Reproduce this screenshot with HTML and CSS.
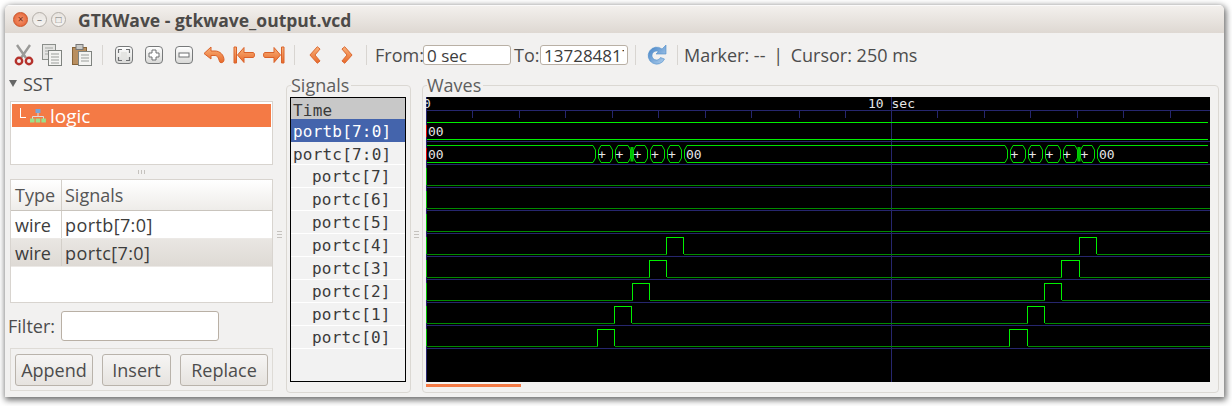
FILE: index.html
```html
<!DOCTYPE html>
<html lang="en">
<head>
  <meta charset="UTF-8" />
  <title>GTKWave - gtkwave_output.vcd</title>
  <link rel="stylesheet" href="styles.css">
</head>
<body>

<svg class="defs" width="0" height="0">
  <defs>
    <linearGradient id="orange" x1="0" y1="0" x2="0" y2="1">
      <stop offset="0" stop-color="#f9b27a"/>
      <stop offset="1" stop-color="#e8692a"/>
    </linearGradient>
    <linearGradient id="key" x1="0" y1="0" x2="0" y2="1">
      <stop offset="0" stop-color="#ffffff"/>
      <stop offset="1" stop-color="#d8d8d6"/>
    </linearGradient>
    <linearGradient id="blue" x1="0" y1="0" x2="1" y2="1">
      <stop offset="0" stop-color="#3f7fc4"/>
      <stop offset="1" stop-color="#b5d2ee"/>
    </linearGradient>
  </defs>
</svg>

<div class="window">

  <div class="titlebar">
    <span class="wm-btn close">&#215;</span>
    <span class="wm-btn">&#8211;</span>
    <span class="wm-btn">&#9633;</span>
    <span class="title">GTKWave - gtkwave_output.vcd</span>
  </div>

  <div class="toolbar">
    <!-- cut -->
    <svg class="tool cut" width="20" height="22" viewBox="0 0 20 22">
      <path d="M3 1 L12 14 M16 1 L7 14" stroke="#9a9a98" stroke-width="2.4" fill="none"/>
      <circle cx="5" cy="17" r="3.2" fill="none" stroke="#b5322c" stroke-width="2.4"/>
      <circle cx="15" cy="17" r="3.2" fill="none" stroke="#b5322c" stroke-width="2.4"/>
    </svg>
    <!-- copy -->
    <svg class="tool doc" width="20" height="22" viewBox="0 0 20 22">
      <rect x="0.5" y="0.5" width="13" height="15" fill="#e4e4e2" stroke="#8b8f8b"/>
      <path d="M3 4h8M3 7h8M3 10h8" stroke="#a5a8a5"/>
      <rect x="6.5" y="6.5" width="13" height="15" fill="#f4f4f2" stroke="#7f837f"/>
      <path d="M9 10h8M9 13h8M9 16h8M9 19h8" stroke="#9a9d9a"/>
    </svg>
    <!-- paste -->
    <svg class="tool doc" width="20" height="22" viewBox="0 0 20 22">
      <rect x="0.5" y="3.5" width="14" height="17" fill="#b98f5f" stroke="#866338"/>
      <rect x="4" y="0.5" width="7" height="5" fill="#c9c9c6" stroke="#777"/>
      <rect x="6.5" y="7.5" width="13" height="14" fill="#f4f4f2" stroke="#7f837f"/>
      <path d="M9 11h8M9 14h8M9 17h8" stroke="#9a9d9a"/>
    </svg>
    <span class="sep first"></span>
    <!-- zoom fit -->
    <svg class="tool key" width="18" height="18" viewBox="0 0 18 18">
      <rect x="0.5" y="0.5" width="17" height="17" rx="3.5" fill="url(#key)" stroke="#77797a"/>
      <rect x="6" y="6" width="6" height="6" fill="#e4e4e2"/>
      <path d="M3.5 7V3.5H7M11 3.5h3.5V7M14.5 11v3.5H11M7 14.5H3.5V11" fill="none" stroke="#6f7173" stroke-width="1.2"/>
    </svg>
    <!-- zoom in -->
    <svg class="tool key" width="18" height="18" viewBox="0 0 18 18">
      <rect x="0.5" y="0.5" width="17" height="17" rx="3.5" fill="url(#key)" stroke="#77797a"/>
      <path d="M7 4h4v3h3v4h-3v3H7v-3H4V7h3z" fill="#fff" stroke="#6f7173"/>
    </svg>
    <!-- zoom out -->
    <svg class="tool key last" width="18" height="18" viewBox="0 0 18 18">
      <rect x="0.5" y="0.5" width="17" height="17" rx="3.5" fill="url(#key)" stroke="#77797a"/>
      <rect x="4" y="7" width="10" height="4" fill="#fff" stroke="#6f7173"/>
    </svg>
    <!-- undo zoom -->
    <svg class="tool wide" width="22" height="18" viewBox="0 0 22 18">
      <path d="M8 1 L1 7.5 L8 13 V9.5 H12 C14.5 9.5 15.5 12 16.5 15.5 C17 17.5 21 17 21 14 C21 9 17 5 12 5 H8 Z" fill="url(#orange)" stroke="#d9622a" stroke-linejoin="round"/>
    </svg>
    <!-- to start -->
    <svg class="tool wide" width="22" height="18" viewBox="0 0 22 18">
      <path d="M1 1h2.5v16H1z" fill="url(#orange)" stroke="#d9622a"/>
      <path d="M11 1.5 L4.5 9 L11 16.5 V11.5 H20 C22 11.5 22 6.5 20 6.5 H11 Z" fill="url(#orange)" stroke="#d9622a" stroke-linejoin="round"/>
    </svg>
    <!-- to end -->
    <svg class="tool wide end" width="22" height="18" viewBox="0 0 22 18">
      <path d="M18.5 1h2.5v16h-2.5z" fill="url(#orange)" stroke="#d9622a"/>
      <path d="M11 1.5 L17.5 9 L11 16.5 V11.5 H2 C0 11.5 0 6.5 2 6.5 H11 Z" fill="url(#orange)" stroke="#d9622a" stroke-linejoin="round"/>
    </svg>
    <span class="sep second"></span>
    <!-- page left -->
    <svg class="tool nav" width="12" height="20" viewBox="0 0 13 20">
      <path d="M9 1 L1 10 L9 19 L12 16.5 L6.5 10 L12 3.5 Z" fill="url(#orange)" stroke="#d9622a" stroke-linejoin="round"/>
    </svg>
    <!-- page right -->
    <svg class="tool nav next" width="12" height="20" viewBox="0 0 13 20">
      <path d="M4 1 L12 10 L4 19 L1 16.5 L6.5 10 L1 3.5 Z" fill="url(#orange)" stroke="#d9622a" stroke-linejoin="round"/>
    </svg>
    <span class="sep third"></span>
    <label class="tb-label from">From:</label>
    <input class="entry" type="text" value="0 sec">
    <label class="tb-label to">To:</label>
    <input class="entry" type="text" value="1372848174">
    <span class="sep fourth"></span>
    <!-- reload -->
    <svg class="tool reload" width="21" height="22" viewBox="0 0 21 22">
      <path d="M16 5 A8.5 8.5 0 1 0 18.5 15 L14.5 13.5 A4.5 4.5 0 1 1 12.5 7.5 L10 10 H20 V1 L16.5 4.5 Z" fill="url(#blue)" stroke="#4f8ecb" stroke-width="0.6"/>
    </svg>
    <span class="sep fifth"></span>
    <span class="tb-label status">Marker: -- <b class="bar">|</b> Cursor: 250 ms</span>
  </div>

  <div class="main">

    <div class="left-pane">
      <div class="expander"><span class="arrow"></span>SST</div>

      <div class="tree">
        <div class="tree-row">
          <span class="tree-line"></span>
          <svg width="16" height="14" viewBox="0 0 16 14">
            <rect x="5.5" y="0" width="5" height="4" fill="#7aa6d8"/>
            <path d="M8 4v4M2.5 10V7.5h11V10" stroke="#ddd" fill="none"/>
            <rect x="0" y="9.5" width="4.5" height="4" fill="#9be08a"/>
            <rect x="5.7" y="9.5" width="4.5" height="4" fill="#9be08a"/>
            <rect x="11.4" y="9.5" width="4.5" height="4" fill="#9be08a"/>
          </svg>
          logic
        </div>
      </div>

      <div class="grip-h"><span></span><span></span><span></span></div>

      <div class="sig-list">
        <div class="sig-head">
          <div class="col-type">Type</div>
          <div class="col-name">Signals</div>
        </div>
        <div class="sig-row">
          <div class="col-type">wire</div>
          <div class="col-name">portb[7:0]</div>
        </div>
        <div class="sig-row active">
          <div class="col-type">wire</div>
          <div class="col-name">portc[7:0]</div>
        </div>
      </div>

      <div class="filter">
        <label>Filter:</label>
        <input class="entry filter-entry" type="text">
      </div>

      <div class="actions">
        <button class="btn append">Append</button>
        <button class="btn insert">Insert</button>
        <button class="btn replace">Replace</button>
      </div>
    </div>

    <div class="grip-v"><span></span><span></span><span></span></div>

    <fieldset class="frame signals">
      <legend>Signals</legend>
      <div class="trace-box">
        <div class="trace time">Time</div>
        <div class="trace sel">portb[7:0]</div>
        <div class="trace">portc[7:0]</div>
        <div class="trace sub">portc[7]</div>
        <div class="trace sub">portc[6]</div>
        <div class="trace sub">portc[5]</div>
        <div class="trace sub">portc[4]</div>
        <div class="trace sub">portc[3]</div>
        <div class="trace sub">portc[2]</div>
        <div class="trace sub">portc[1]</div>
        <div class="trace sub">portc[0]</div>
      </div>
    </fieldset>

    <div class="grip-v narrow"><span></span><span></span><span></span></div>

    <fieldset class="frame waves">
      <legend>Waves</legend>
      <svg class="wave-canvas" width="784" height="285" viewBox="426 97 784 285">
        <rect x="426" y="97" width="784" height="285" fill="#000"/>

        <!-- grid -->
        <g stroke="#26266e" fill="none" shape-rendering="crispEdges">
          <path d="M426.5 97V382M891.5 97V382"/>
          <path d="M426 110.5H1210M426 141.5H1210M426 164.5H1210M426 187.5H1210M426 210.5H1210M426 233.5H1210M426 256.5H1210M426 279.5H1210M426 302.5H1210M426 325.5H1210M426 348.5H1210"/>
          <path d="M472.5 110V118M519.5 110V118M565.5 110V118M612.5 110V118M658.5 110V118M705.5 110V118M751.5 110V118M799.5 110V118M845.5 110V118M937.5 110V118M984.5 110V118M1030.5 110V118M1077.5 110V118M1123.5 110V118M1170.5 110V118"/>
        </g>

        <g class="ruler">
          <text x="423" y="108">0</text>
          <text x="868" y="108">10 sec</text>
        </g>

        <!-- markers at time zero -->
        <path d="M426.5 125V137M426.5 148V160" stroke="#e00000" fill="none" shape-rendering="crispEdges"/>
        <path d="M426.5 168V185M426.5 191V208M426.5 214V231M426.5 237V254M426.5 260V277M426.5 283V300M426.5 306V323M426.5 329V346" stroke="#00c000" fill="none" shape-rendering="crispEdges"/>

        <!-- portb -->
        <path d="M427 122.5H1208M427 139.5H1208" stroke="#00f000" fill="none" shape-rendering="crispEdges"/>
        <text class="val" x="428" y="136">00</text>

        <!-- portc bus -->
        <g stroke="#00e000" fill="none">
          <path d="M427 145.5H593L595.5 150V158L593 162.5H427"/>
          <path d="M601 145.5H610L612.5 150V158L610 162.5H601L598.5 158V150Z"/>
          <path d="M618 145.5H628L630.5 150V158L628 162.5H618L615.5 158V150Z"/>
          <path d="M636 145.5H645L647.5 150V158L645 162.5H636L633.5 158V150Z"/>
          <path d="M653 145.5H662L664.5 150V158L662 162.5H653L650.5 158V150Z"/>
          <path d="M670 145.5H679L681.5 150V158L679 162.5H670L667.5 158V150Z"/>
          <path d="M687 145.5H1005L1007.5 150V158L1005 162.5H687L684.5 158V150Z"/>
          <path d="M1013 145.5H1023L1025.5 150V158L1023 162.5H1013L1010.5 158V150Z"/>
          <path d="M1031 145.5H1040L1042.5 150V158L1040 162.5H1031L1028.5 158V150Z"/>
          <path d="M1048 145.5H1058L1060.5 150V158L1058 162.5H1048L1045.5 158V150Z"/>
          <path d="M1066 145.5H1075L1077.5 150V158L1075 162.5H1066L1063.5 158V150Z"/>
          <path d="M1083 145.5H1092L1094.5 150V158L1092 162.5H1083L1080.5 158V150Z"/>
          <path d="M1208 145.5H1100L1097.5 150V158L1100 162.5H1208"/>
        </g>
        <path d="M632 147V161.5M1079 147V161.5" stroke="#00c000" stroke-width="3"/>
        <text class="val" x="428" y="159">00</text>
        <g class="val">
          <text x="598" y="159">+</text>
          <text x="615.5" y="159">+</text>
          <text x="633.5" y="159">+</text>
          <text x="651" y="159">+</text>
          <text x="668" y="159">+</text>
          <text x="686" y="159">00</text>
          <text x="1010.5" y="159">+</text>
          <text x="1028.5" y="159">+</text>
          <text x="1045.5" y="159">+</text>
          <text x="1063" y="159">+</text>
          <text x="1080.5" y="159">+</text>
          <text x="1099" y="159">00</text>
        </g>

        <!-- flat bits -->
        <path d="M427 185.5H1210M427 208.5H1210M427 231.5H1210" stroke="#008a00" fill="none" shape-rendering="crispEdges"/>

        <!-- pulses -->
        <g stroke="#008a00" fill="none" shape-rendering="crispEdges">
          <path d="M427 254.5H666.5M683.5 254.5H1079.5M1096.5 254.5H1210"/>
          <path d="M427 277.5H649.5M666.5 277.5H1061.5M1079.5 277.5H1210"/>
          <path d="M427 300.5H632.5M649.5 300.5H1044.5M1061.5 300.5H1210"/>
          <path d="M427 323.5H614.5M631.5 323.5H1027.5M1044.5 323.5H1210"/>
          <path d="M427 346.5H597.5M614.5 346.5H1009.5M1027.5 346.5H1210"/>
        </g>
        <g stroke="#00f000" fill="none" shape-rendering="crispEdges">
          <path d="M666.5 254V237.5H683.5V254M1079.5 254V237.5H1096.5V254"/>
          <path d="M649.5 277V260.5H666.5V277M1061.5 277V260.5H1079.5V277"/>
          <path d="M632.5 300V283.5H649.5V300M1044.5 300V283.5H1061.5V300"/>
          <path d="M614.5 323V306.5H631.5V323M1027.5 323V306.5H1044.5V323"/>
          <path d="M597.5 346V329.5H614.5V346M1009.5 346V329.5H1027.5V346"/>
        </g>
      </svg>
      <div class="scroll-thumb"></div>
    </fieldset>

  </div>
</div>

</body>
</html>
```

FILE: styles.css
```css
* {
  box-sizing: border-box;
}
body {
  margin: 0;
  min-height: 406px;
  background: #fff;
  font-family: 'Open Sans', 'Noto Sans', sans-serif;
  font-size: 18px;
  color: #3c3c3c;
}
.defs {
  position: absolute;
}
.window {
  margin: 5px 0 0 5px;
  width: 1219px;
  height: 392px;
  background: #f2f1f0;
  border-radius: 5px 5px 0 0;
  box-shadow: 1px 2px 6px 1px rgba(0,0,0,0.6);
  overflow: hidden;
}

/* title bar */
.titlebar {
  height: 28px;
  padding-left: 8px;
  display: flex;
  align-items: center;
  gap: 4px;
  background: linear-gradient(#f3f0ed, #ded8d2);
  border-top: 1px solid #fbfafa;
}
.wm-btn {
  width: 15px;
  height: 15px;
  border-radius: 50%;
  border: 1px solid #b3aea8;
  background: linear-gradient(#e8e4df, #f6f4f2);
  font-size: 10px;
  line-height: 12px;
  text-align: center;
  color: #777;
}
.wm-btn.close {
  background: radial-gradient(#f59a75, #e2592a);
  border-color: #c9562c;
  color: #7a2c12;
}
.title {
  margin-left: 8px;
  font-size: 17.5px;
  font-weight: 700;
  color: #4c4a48;
}

/* toolbar */
.toolbar {
  height: 37px;
  padding: 7px 0 0 9px;
  display: flex;
  align-items: center;
  background: #f2f1f0;
}
.tool {
  flex: none;
}
.tool.cut {
  margin-right: 8px;
}
.tool.doc {
  margin-right: 10px;
}
.tool.key {
  margin-right: 12px;
}
.tool.key.last {
  margin-right: 10px;
}
.tool.wide {
  margin-right: 8px;
}
.tool.wide.end {
  margin-right: 9px;
}
.tool.nav {
  margin-right: 20px;
}
.tool.nav.next {
  margin-right: 13px;
}
.sep {
  flex: none;
  width: 1px;
  height: 20px;
  background: #d8d5d1;
}
.sep.first {
  margin-right: 12px;
}
.sep.second {
  margin-right: 14px;
}
.sep.third {
  margin-right: 8px;
}
.sep.fourth {
  margin: 0 10px 0 7px;
}
.sep.fifth {
  margin: 0 6px 0 0;
}
.tool.reload {
  margin-right: 10px;
}
.tb-label {
  font-size: 18px;
  color: #4c4c4c;
  white-space: nowrap;
}
.tb-label.from {
  width: 48px;
}
.tb-label.to {
  width: 26px;
  margin-left: 3px;
}
.bar {
  font-weight: 400;
  margin: 0 3px;
}
.entry {
  width: 88px;
  height: 20px;
  padding: 0 3px;
  border: 1px solid #b9b0a5;
  border-radius: 3px;
  background: #fff;
  font-family: inherit;
  font-size: 17px;
  color: #3c3c3c;
}

/* main area */
.main {
  height: 327px;
  padding: 5px 5px 4px 5px;
  display: flex;
}
.left-pane {
  flex: none;
  width: 263px;
  display: flex;
  flex-direction: column;
}
.expander {
  height: 21px;
  padding-bottom: 3px;
  line-height: 18px;
  display: flex;
  align-items: center;
  color: #4c4c4c;
}
.arrow {
  width: 0;
  height: 0;
  margin: -1px 6px 0 -1px;
  border-left: 4px solid transparent;
  border-right: 4px solid transparent;
  border-top: 7px solid #666;
}
.tree {
  margin-top: 5px;
  height: 64px;
  border: 1px solid #d8d4cf;
  padding: 1px;
  background: #fff;
}
.tree-row {
  height: 23px;
  margin-top: 1px;
  background: #f47a45;
  color: #fff;
  font-size: 19px;
  display: flex;
  align-items: center;
  gap: 4px;
  padding-left: 8px;
}
.tree-line {
  width: 6px;
  height: 10px;
  margin-top: -6px;
  border-left: 1px solid #fff;
  border-bottom: 1px solid #fff;
}
.grip-h {
  height: 14px;
  display: flex;
  justify-content: center;
  align-items: center;
  gap: 2px;
}
.grip-h span {
  width: 1px;
  height: 4px;
  background: #c5c2be;
}
.sig-list {
  height: 124px;
  border: 1px solid #d8d4cf;
  background: #fff;
}
.sig-head,
.sig-row {
  display: flex;
  align-items: center;
}
.sig-head {
  height: 31px;
  background: linear-gradient(#fff, #eeece9);
  border-bottom: 1px solid #c9c4bd;
  color: #555;
}
.sig-row {
  height: 28px;
  border-bottom: 1px solid #ece9e6;
}
.sig-row .col-name {
  letter-spacing: 0.4px;
}
.sig-row.active {
  background: linear-gradient(#e9e6e2, #dedad5);
}
.col-type {
  width: 51px;
  padding-left: 4px;
  border-right: 1px solid #d3cfc9;
  align-self: stretch;
  display: flex;
  align-items: center;
}
.col-name {
  padding-left: 3px;
}
.filter {
  height: 45px;
  display: flex;
  align-items: center;
  gap: 6px;
  margin-left: -2px;
  color: #4c4c4c;
}
.filter-entry {
  width: 158px;
  height: 30px;
}
.actions {
  height: 43px;
  border: 1px solid #dedbd6;
  display: flex;
  align-items: center;
  padding: 0 4px;
  gap: 9px;
}
.btn {
  height: 32px;
  padding: 0;
  border: 1px solid #b9b3ab;
  border-radius: 3px;
  background: linear-gradient(#f6f5f4, #e6e3df);
  font-family: inherit;
  font-size: 18px;
  color: #4c4c4c;
}
.btn.append {
  width: 78px;
}
.btn.insert {
  width: 69px;
}
.btn.replace {
  width: 88px;
}
.grip-v {
  flex: none;
  width: 13px;
  display: flex;
  flex-direction: column;
  justify-content: center;
  align-items: center;
  gap: 2px;
}
.grip-v.narrow {
  width: 11px;
}
.grip-v span {
  width: 5px;
  height: 1px;
  background: #c5c2be;
}

/* framed panes */
.frame {
  margin: 0;
  min-width: 0;
  border: 1px solid #dbd8d3;
  border-radius: 4px;
  padding: 2px 8px 0 3px;
}
.frame legend {
  padding: 0 2px 0 0;
  margin-left: 1px;
  font-size: 18px;
  line-height: 20px;
  color: #5e5e5e;
}
.signals {
  flex: none;
  width: 125px;
  padding-right: 3px;
}
.waves {
  flex: 1;
}
.trace-box {
  width: 116px;
  height: 285px;
  border: 1px solid #000;
  background: #f2f2f2;
  font-family: 'DejaVu Sans Mono', monospace;
  font-size: 16px;
  letter-spacing: 0.2px;
  color: #3a3a3a;
}
.trace {
  height: 23px;
  line-height: 25px;
  padding-left: 2px;
  border-bottom: 1px solid #fff;
}
.trace.sub {
  line-height: 23px;
  padding-left: 21px;
}
.trace.time {
  height: 21px;
  line-height: 25px;
  background: #c8c8c8;
  border: 0;
}
.trace.sel {
  background: #4464ac;
  color: #fff;
  border: 0;
}
.wave-canvas {
  display: block;
}
.ruler text,
.val text,
text.val {
  font-family: 'DejaVu Sans Mono', monospace;
  font-size: 13px;
  fill: #e6e6e6;
}
.scroll-thumb {
  width: 95px;
  height: 3px;
  margin-top: 2px;
  background: #f47a45;
}
```
